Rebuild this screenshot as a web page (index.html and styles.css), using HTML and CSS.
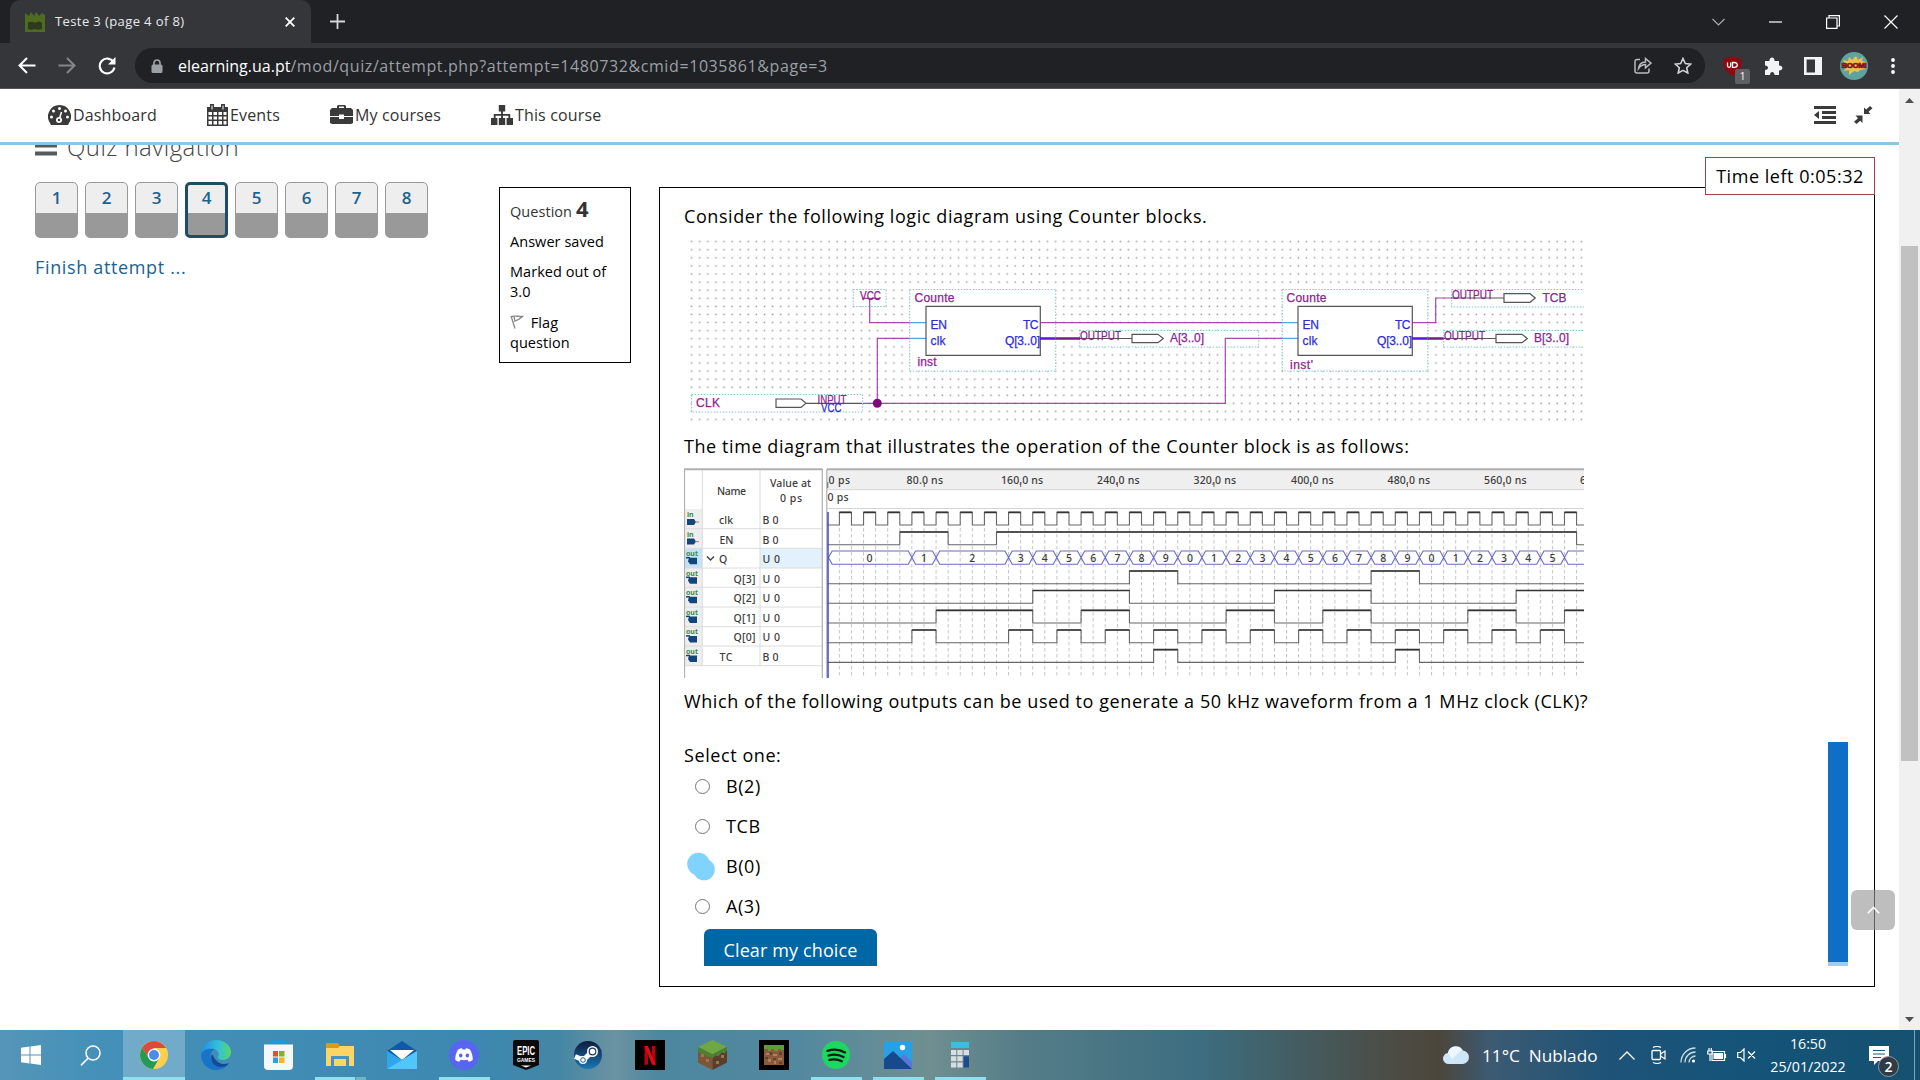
FILE: index.html
```html
<!DOCTYPE html>
<html lang="en">
<head>
<meta charset="utf-8">
<title>Teste 3 (page 4 of 8)</title>
<link rel="stylesheet" href="styles.css">
</head>
<body>
<header class="tabs">
  <div class="tab">
    <svg class="favicon" width="20" height="20" viewBox="0 0 20 20"><path fill="#4f6b22" d="M0 1l4 3 2-4 3 4 2-4 3 4 3-3 3 2v17H0z"/><path fill="#2e3a1c" d="M3 11c2-2 5-1 7 0 2-1 5-2 7 0v6c-2 1-5 1-7 0-2 1-5 1-7 0z"/></svg>
    <span class="tab-title">Teste 3 (page 4 of 8)</span>
    <svg class="tab-close" width="10" height="10" viewBox="0 0 10 10"><path d="M.7.7l8.6 8.6M9.3.7L.7 9.3" stroke="#fff" stroke-width="1.8"/></svg>
  </div>
  <svg class="tab-plus" width="15" height="15" viewBox="0 0 15 15"><path d="M7.5 0v15M0 7.5h15" stroke="#d5d6d8" stroke-width="1.8"/></svg>
  <div class="win-controls">
    <svg width="13" height="8" viewBox="0 0 13 8"><path d="M.5 1l6 6 6-6" fill="none" stroke="#aaa" stroke-width="1.2"/></svg>
    <svg width="13" height="2" viewBox="0 0 13 2"><path d="M0 1h13" stroke="#fff" stroke-width="1.2"/></svg>
    <svg width="14" height="14" viewBox="0 0 14 14"><path d="M.6 3h10.4v10.4H.6zM3 3V.6h10.4v10.4H11" fill="none" stroke="#fff" stroke-width="1.2"/></svg>
    <svg width="14" height="14" viewBox="0 0 14 14"><path d="M.5.5l13 13M13.5.5l-13 13" stroke="#fff" stroke-width="1.2"/></svg>
  </div>
</header>
<div class="toolbar">
  <svg width="18" height="17" viewBox="0 0 18 17"><path d="M17.5 8.5H2M9 1L1.5 8.5 9 16" fill="none" stroke="#fff" stroke-width="2"/></svg>
  <svg width="18" height="17" viewBox="0 0 18 17"><path d="M.5 8.5H16M9 1l7.5 7.5L9 16" fill="none" stroke="#84868a" stroke-width="2"/></svg>
  <svg width="18" height="18" viewBox="0 0 18 18"><path d="M15.4 5A7.4 7.4 0 1 0 16.400 10.500" fill="none" stroke="#fff" stroke-width="2.100"/><path d="M17.500 0v7.500H10z" fill="#fff"/></svg>
  <div class="urlbar">
    <svg width="12" height="14" viewBox="0 0 12 14"><path d="M3 6V4a3 3 0 0 1 6 0v2" fill="none" stroke="#9aa0a6" stroke-width="1.700"/><rect x=".5" y="5.500" width="11" height="8.500" rx="1.500" fill="#9aa0a6"/></svg>
    <span class="url"><b>elearning.ua.pt</b>/mod/quiz/attempt.php?attempt=1480732&amp;cmid=1035861&amp;page=3</span>
    <svg class="share" width="18" height="17" viewBox="0 0 18 17"><path d="M6 2.500H3a2 2 0 0 0-2 2V14a2 2 0 0 0 2 2h10a2 2 0 0 0 2-2v-2.500M4.500 11.500c.4-4 2.500-6.300 7-6.500V1.500L17 6.200l-5.500 4.600V7.600c-3.500 0-5.200 1.300-7 3.900z" fill="none" stroke="#b9bbbe" stroke-width="1.500"/></svg>
    <svg width="18" height="17" viewBox="0 0 18 17"><path d="M9 1.500l2.300 5 5.400.6-4 3.600 1.100 5.300L9 13.300 4.200 16l1.100-5.300-4-3.600 5.400-.6z" fill="none" stroke="#d0d1d3" stroke-width="1.600"/></svg>
  </div>
  <div class="exts">
    <div class="ublock">
      <svg width="19" height="20" viewBox="0 0 19 20"><path fill="#8d0b10" d="M9.500 0C12 2 15 2.500 18.500 2.500 19 11 17 16 9.500 20 2 16 0 11 .5 2.500 4 2.500 7 2 9.500 0z"/><path d="M4.500 6.500v3.300c0 2 3.200 2 3.200 0V6.500M9.500 6.500v4.800h1.800c4 0 4-4.800 0-4.800z" fill="none" stroke="#fff" stroke-width="1.300"/></svg>
      <span class="ext-count">1</span>
    </div>
    <svg width="19" height="19" viewBox="0 0 19 19"><path fill="#f1f3f4" d="M1 5h4.500C5 1 10.500 0 10.500 4.500V5H15v4.500c4.500 0 4.500 5 0 5V19h-4.500c0-4-4.500-4-4.500 0H1v-5c4 0 4-4.500 0-4.500z"/></svg>
    <svg width="18" height="18" viewBox="0 0 18 18"><path d="M1.300 1.300h15.400v15.400H1.300z" fill="none" stroke="#f1f3f4" stroke-width="2.600"/><path fill="#f1f3f4" d="M11 1h6v16h-6z"/></svg>
    <svg class="avatar" width="28" height="28" viewBox="0 0 28 28"><circle cx="14" cy="14" r="14" fill="#5fa3a1"/><path fill="#f2c14a" d="M3 8l5 1 1-4 3 3 4-4 2 4 5-3-1 4 4 1-3 4 3 3-6 1-2 2-4-1-5 4 0-5-5 1 2-4z"/><text x="14" y="15.500" class="boom">BOOM!</text></svg>
    <svg class="dots3" width="4" height="16" viewBox="0 0 4 16"><g fill="#fff"><circle cx="2" cy="2" r="1.900"/><circle cx="2" cy="8" r="1.900"/><circle cx="2" cy="14" r="1.900"/></g></svg>
  </div>
</div>
<div class="viewport">
  <div class="page">
    <nav class="nav">
      <a class="n1"><svg width="23" height="20" viewBox="0 0 23 20"><path fill="#3a3a3a" d="M11.500 0A11.500 11.500 0 0 0 2 18l1 2h17l1-2A11.500 11.500 0 0 0 11.500 0z"/><g fill="#fff"><circle cx="11.500" cy="3.500" r="1.500"/><circle cx="5.500" cy="6" r="1.500"/><circle cx="3.500" cy="12" r="1.500"/><circle cx="19.500" cy="12" r="1.500"/><circle cx="17.500" cy="6" r="1.500"/><circle cx="11" cy="15" r="3"/></g><path d="M11 15l2.500-8" stroke="#fff" stroke-width="1.600"/><circle cx="11" cy="15" r="1.200" fill="#3a3a3a"/></svg><span>Dashboard</span></a>
      <a class="n2"><svg width="21" height="22" viewBox="0 0 21 22"><path fill="#3a3a3a" fill-rule="evenodd" d="M0 3h3V0h4v3h7V0h4v3h3v19H0zM1.500 8v3h3.500V8zM6.500 8v3h3.500V8zM11.500 8v3h3.500V8zM16.500 8v3h3V8zM1.500 12.500v3h3.500v-3zM6.500 12.500v3h3.500v-3zM11.500 12.500v3h3.500v-3zM16.500 12.500v3h3v-3zM1.500 17v3.500h3.500V17zM6.500 17v3.500h3.500V17zM11.500 17v3.500h3.500V17zM16.500 17v3.500h3V17zM4.500 1.500v4h1v-4zM15.500 1.500v4h1v-4z"/></svg><span>Events</span></a>
      <a class="n3"><svg width="23" height="20" viewBox="0 0 23 20"><path fill="#3a3a3a" fill-rule="evenodd" d="M7 3V1l1-1h7l1 1v2h5l2 2v6H14V9.500H9V11H0V5l2-2zM9 1.500V3h5V1.500zM0 12h9v2h5v-2h9v6l-2 1H2l-2-1z"/></svg><span>My courses</span></a>
      <a class="n4"><svg width="22" height="20" viewBox="0 0 24 20" preserveAspectRatio="none"><path fill="#3a3a3a" d="M8.500 0h7v6.500H13V9h8v4h3v7h-7v-7h2v-2.300h-6V13h2.500v7h-7v-7H11v-2.300H5V13h2v7H0v-7h3V9h8V6.500H8.500z"/></svg><span>This course</span></a>
      <svg class="outdent" width="22" height="18" viewBox="0 0 22 18"><path fill="#3a3a3a" d="M0 0h22v3H0zM8 5h14v3H8zM8 10h14v3H8zM0 15h22v3H0zM5 5v8L0 9z"/></svg>
      <svg class="compress" width="19" height="18" viewBox="0 0 19 18"><path fill="#3a3a3a" d="M10 8V1.500l2.200 2L16 0l2.500 2.200-4 3.600L16.500 8zM8.500 9.500V17l-2.300-2.300L2.500 18 0 15.800l4-3.600-2.500-2.700z"/></svg>
    </nav>
    <main class="content">
      <aside class="side">
        <h3 class="side-title"><svg width="22" height="20" viewBox="0 0 22 20"><path fill="#555b60" d="M0 0h22v4H0zM0 7.500h22v4H0zM0 15.500h22v4H0z"/></svg><span>Quiz navigation</span></h3>
        <div class="qn">
          <a>1</a><a>2</a><a>3</a><a class="current">4</a><a>5</a><a>6</a><a>7</a><a>8</a>
        </div>
        <a class="finish">Finish attempt ...</a>
      </aside>
      <section class="info">
        <p class="qno">Question <b>4</b></p>
        <p>Answer saved</p>
        <p>Marked out of 3.0</p>
        <p class="flag"><svg width="14" height="14" viewBox="0 0 14 14"><path d="M1 1l4 12.500M1.500 1.500c4-1 6 0 11 0-2 2-3 3-8.500 5M4 2l1 4" fill="none" stroke="#888" stroke-width="1.300"/></svg> Flag<br>question</p>
      </section>
      <section class="question">
        <p class="t t1">Consider the following logic diagram using Counter blocks.</p>
        <svg class="circuit" width="900" height="190" viewBox="684 235 900 190">
          <defs><pattern id="dots" x="687.700" y="237.700" width="8.090" height="8.090" patternUnits="userSpaceOnUse"><rect x="3.200" y="3.200" width="1.500" height="1.500" fill="#999"/></pattern></defs>
          <rect x="688" y="238" width="896" height="184" fill="url(#dots)"/>
          <g class="box">
            <path d="M853.300 289.500h32.700v17h-32.700zM909.700 289.500h146v81.500h-146zM1282.300 289.500h145.500v81.500h-145.500zM691.700 394.500h171v17.500h-171zM1079.700 330.500h179v16.500h-179zM1451.700 289.500h140v17.500h-140zM1443.700 330.500h150v16.500h-150z"/>
          </g>
          <g class="wire"><path d="M862 298.300h18M869.700 298.300v24.400h40M877.300 403.300v-65h32.400M862.700 403.300h362.600v-65h57M1040.300 322.700h242M1412.300 322.700h23.400V298h16"/></g>
          <g class="pinlead"><path d="M909.700 322.700h16.300M909.700 338.300h16.300M1282.300 322.700h15.700M1282.300 338.300h15.700"/></g>
          <g class="dark"><path d="M926 306.300h114.300v49H926zM1298 306.300h114.300v49H1298zM776 399h25l5 4.200-5 4.200h-25zM806 403.300h56M1080 338.500h52M1132 334.300h26l5.300 4.200-5.300 4.200h-26zM1451 298h53M1504 293.700h26l5.300 4.300-5.300 4.300h-26zM1444 338.500h52M1496 334.300h26l5.300 4.200-5.300 4.200h-26z"/></g>
          <path d="M1040 338.500h15.700M1412 338.500h15.700" stroke="#5a14e0" stroke-width="2.600"/>
          <path d="M1055.700 338.500h24.300M1427.700 338.500h16" stroke="#7c1a86" stroke-width="2.400"/>
          <circle cx="877.300" cy="403.300" r="4.500" fill="#7c0a7c"/>
          <g class="pt">
            <text x="860" y="299.500" textLength="21" lengthAdjust="spacingAndGlyphs">VCC</text>
            <text x="914.500" y="301.700" textLength="40">Counte</text>
            <text x="917.500" y="366.300" textLength="19">inst</text>
            <text x="1286.500" y="301.700" textLength="40">Counte</text>
            <text x="1290" y="369.300" textLength="23">inst'</text>
            <text x="696" y="406.700" textLength="24">CLK</text>
            <text x="817.500" y="403.700" textLength="29" lengthAdjust="spacingAndGlyphs">INPUT</text>
            <text x="1080" y="339.500" textLength="41" lengthAdjust="spacingAndGlyphs">OUTPUT</text>
            <text x="1170" y="342.300" textLength="34">A[3..0]</text>
            <text x="1452" y="299.300" textLength="41" lengthAdjust="spacingAndGlyphs">OUTPUT</text>
            <text x="1542.500" y="301.500" textLength="24">TCB</text>
            <text x="1444" y="339.500" textLength="41" lengthAdjust="spacingAndGlyphs">OUTPUT</text>
            <text x="1534" y="342.300" textLength="35">B[3..0]</text>
          </g>
          <g class="bt">
            <text x="930.500" y="329" textLength="16.500">EN</text><text x="930.500" y="345.300" textLength="15">clk</text>
            <text x="1023" y="329" textLength="15.500">TC</text><text x="1005" y="345.300" textLength="35">Q[3..0]</text>
            <text x="1302.500" y="329" textLength="16.500">EN</text><text x="1302.500" y="345.300" textLength="15">clk</text>
            <text x="1395" y="329" textLength="15.500">TC</text><text x="1377" y="345.300" textLength="35">Q[3..0]</text>
            <text x="821" y="412.200" textLength="20.500" lengthAdjust="spacingAndGlyphs">VCC</text>
          </g>
        </svg>
        <p class="t t2">The time diagram that illustrates the operation of the Counter block is as follows:</p>
        <svg class="timing" width="900" height="210" viewBox="684 468 900 210">
          <defs>
            <pattern id="grid" x="826.800" y="528" width="12.085" height="6" patternUnits="userSpaceOnUse"><rect width="1" height="3.500" fill="#c4c4c4"/></pattern>
            <g id="in"><text x="687" y="517" class="io">in</text><path fill="#12457c" d="M687 519h7l2 3-2 3h-7z"/><path d="M695 522h4" stroke="#c66" stroke-width="1"/></g>
            <g id="out"><text x="686" y="517" class="io">out</text><path fill="#12457c" d="M689 518.500h8v6.500h-7l-2-3z"/><path d="M686 518.500h4" stroke="#12457c" stroke-width="1.500"/></g>
          </defs>
          <rect x="684" y="509" width="18" height="157" fill="#eee"/>
          <rect x="684" y="548.500" width="18" height="19.500" fill="#c4e1f5"/><rect x="760" y="548.500" width="62" height="19.500" fill="#e2f1fc"/>
          <path d="M684 528.700h138M684 548.300h138M684 568h138M684 587.300h138M684 607h138M684 626.700h138M684 646h138M684 665.700h138M702.300 470v196M760 470v196" stroke="#dcdcdc"/>
          <rect x="827" y="470" width="757" height="19.500" fill="#efefef"/>
          <path d="M827 489.700h757M827 508.500h757" stroke="#d4d4d4"/>
          <path d="M684 469.300h138.500M827 469.300h757" stroke="#b0b0b0" stroke-width="2"/>
          <path d="M684.500 469v209M822.300 469v209M826.800 469v209" stroke="#b0b0b0" stroke-width="1.200"/>
          <rect x="838" y="528" width="746" height="150" fill="url(#grid)"/>
          <g class="tt">
            <text x="717" y="494.500" textLength="29">Name</text><text x="770" y="487" textLength="41">Value at</text><text x="780" y="502" textLength="22">0 ps</text>
            <text x="719" y="524" textLength="14">clk</text><text x="719.500" y="543.700" textLength="14">EN</text><text x="719" y="563.200">Q</text>
            <text x="733.500" y="582.700" textLength="22">Q[3]</text><text x="733.500" y="602.300" textLength="22">Q[2]</text><text x="733.500" y="621.800" textLength="22">Q[1]</text><text x="733.500" y="641.400" textLength="22">Q[0]</text><text x="719.500" y="661" textLength="13">TC</text>
            <text x="762.500" y="524" textLength="16">B 0</text><text x="762.500" y="543.700" textLength="16">B 0</text><text x="762.500" y="563.200" textLength="17.500">U 0</text><text x="762.500" y="582.700" textLength="17.500">U 0</text><text x="762.500" y="602.300" textLength="17.500">U 0</text><text x="762.500" y="621.800" textLength="17.500">U 0</text><text x="762.500" y="641.400" textLength="17.500">U 0</text><text x="762.500" y="661" textLength="16">B 0</text>
            <text x="828.500" y="484" textLength="21.500">0 ps</text><text x="827.500" y="500.700" textLength="21">0 ps</text>
            <text x="906.500" y="484" textLength="36.500">80.0 ns</text><text x="1001" y="484" textLength="42">160,0 ns</text><text x="1097" y="484" textLength="42.500">240,0 ns</text><text x="1193.500" y="484" textLength="42.500">320,0 ns</text><text x="1291" y="484" textLength="42.500">400,0 ns</text><text x="1387.500" y="484" textLength="42.500">480,0 ns</text><text x="1484" y="484" textLength="42.500">560,0 ns</text><text x="1580" y="484">6</text>
          </g>
          <path d="M827.800 482v6M924.300 482v5M1020.700 482v5M1117.400 482v5M1214 482v5M1310.700 482v5M1407.400 482v5M1504.100 482v5" stroke="#666"/>
          <path d="M707 556.500l3.500 3.500 3.500-3.500" fill="none" stroke="#444" stroke-width="1.500"/>
          <use href="#in"/><use href="#in" y="19.600"/><use href="#out" y="39.200"/><use href="#out" y="58.800"/><use href="#out" y="78.300"/><use href="#out" y="97.900"/><use href="#out" y="117.400"/><use href="#out" y="137"/>
          <!-- one horizontal unit is 10 ns -->
          <g class="wave">
            <path transform="matrix(12.085 0 0 1 827.300 512.300)" d="M0 12.700
              H1V0H2V12.700H3V0H4V12.700H5V0H6V12.700H7V0H8V12.700H9V0H10V12.700
              H11V0H12V12.700H13V0H14V12.700H15V0H16V12.700H17V0H18V12.700H19V0H20V12.700
              H21V0H22V12.700H23V0H24V12.700H25V0H26V12.700H27V0H28V12.700H29V0H30V12.700
              H31V0H32V12.700H33V0H34V12.700H35V0H36V12.700H37V0H38V12.700H39V0H40V12.700
              H41V0H42V12.700H43V0H44V12.700H45V0H46V12.700H47V0H48V12.700H49V0H50V12.700
              H51V0H52V12.700H53V0H54V12.700H55V0H56V12.700H57V0H58V12.700H59V0H60V12.700
              H61V0H62V12.700H63"/>
            <path transform="matrix(12.085 0 0 1 827.300 532)" d="M0 12.700H6V0H10V12.700H14V0H62V12.700H63"/>
            <path transform="matrix(12.085 0 0 1 827.300 571)" d="M0 12.700H25V0H29V12.700H45V0H49V12.700H63"/>
            <path transform="matrix(12.085 0 0 1 827.300 590.500)" d="M0 12.700H17V0H25V12.700H37V0H45V12.700H57V0H63"/>
            <path transform="matrix(12.085 0 0 1 827.300 610.300)" d="M0 12.700H9V0H17V12.700H21V0H25V12.700H33V0H37V12.700H41V0H45V12.700H53V0H57V12.700H61V0H63"/>
            <path transform="matrix(12.085 0 0 1 827.300 630)" d="M0 12.700H7V0H9V12.700H15V0H17V12.700H19V0H21V12.700H23V0H25V12.700H27V0H29V12.700H31V0H33V12.700H35V0H37V12.700H39V0H41V12.700H43V0H45V12.700H47V0H49V12.700H51V0H53V12.700H55V0H57V12.700H59V0H61V12.700H63"/>
            <path transform="matrix(12.085 0 0 1 827.300 649.700)" d="M0 12.700H27V0H29V12.700H47V0H49V12.700H63"/>
          </g>
          <g class="high">
            <path transform="matrix(12.085 0 0 1 827.300 512.300)" d="M1 0H2M3 0H4M5 0H6M7 0H8M9 0H10M11 0H12M13 0H14M15 0H16M17 0H18M19 0H20M21 0H22M23 0H24M25 0H26M27 0H28M29 0H30M31 0H32M33 0H34M35 0H36M37 0H38M39 0H40M41 0H42M43 0H44M45 0H46M47 0H48M49 0H50M51 0H52M53 0H54M55 0H56M57 0H58M59 0H60M61 0H62"/>
            <path transform="matrix(12.085 0 0 1 827.300 532)" d="M6 0H10M14 0H62"/>
            <path transform="matrix(12.085 0 0 1 827.300 571)" d="M25 0H29M45 0H49"/>
            <path transform="matrix(12.085 0 0 1 827.300 590.500)" d="M17 0H25M37 0H45M57 0H63"/>
            <path transform="matrix(12.085 0 0 1 827.300 610.300)" d="M9 0H17M21 0H25M33 0H37M41 0H45M53 0H57M61 0H63"/>
            <path transform="matrix(12.085 0 0 1 827.300 630)" d="M7 0H9M15 0H17M19 0H21M23 0H25M27 0H29M31 0H33M35 0H37M39 0H41M43 0H45M47 0H49M51 0H53M55 0H57M59 0H61"/>
            <path transform="matrix(12.085 0 0 1 827.300 649.700)" d="M27 0H29M47 0H49"/>
          </g>
          <g class="bus">
            <path transform="matrix(12.085 0 0 1 827.300 551)" d="M.1 6.600l.3-6.600H6.700l.3 6.600-.3 6.700H.4zM7 6.600l.3-6.600h1.400l.3 6.600-.3 6.700H7.300zM9 6.600l.3-6.600h5.400l.3 6.600-.3 6.700H9.300zM15 6.600l.3-6.600h1.400l.3 6.600-.3 6.700h-1.400zm2 0l.3-6.600h1.400l.3 6.600-.3 6.700h-1.400zm2 0l.3-6.600h1.400l.3 6.600-.3 6.700h-1.400zm2 0l.3-6.600h1.400l.3 6.600-.3 6.700h-1.400zm2 0l.3-6.600h1.400l.3 6.600-.3 6.700h-1.400zm2 0l.3-6.600h1.400l.3 6.600-.3 6.700h-1.400zm2 0l.3-6.600h1.400l.3 6.600-.3 6.700h-1.400zm2 0l.3-6.600h1.400l.3 6.600-.3 6.700h-1.400zm2 0l.3-6.600h1.400l.3 6.600-.3 6.700h-1.400zm2 0l.3-6.600h1.400l.3 6.600-.3 6.700h-1.400zm2 0l.3-6.600h1.400l.3 6.600-.3 6.700h-1.400zm2 0l.3-6.600h1.400l.3 6.600-.3 6.700h-1.400zm2 0l.3-6.600h1.400l.3 6.600-.3 6.700h-1.400zm2 0l.3-6.600h1.400l.3 6.600-.3 6.700h-1.400zm2 0l.3-6.600h1.400l.3 6.600-.3 6.700h-1.400zm2 0l.3-6.600h1.400l.3 6.600-.3 6.700h-1.400zm2 0l.3-6.600h1.400l.3 6.600-.3 6.700h-1.400zm2 0l.3-6.600h1.400l.3 6.600-.3 6.700h-1.400zm2 0l.3-6.600h1.400l.3 6.600-.3 6.700h-1.400zm2 0l.3-6.600h1.400l.3 6.600-.3 6.700h-1.400zm2 0l.3-6.600h1.400l.3 6.600-.3 6.700h-1.400zm2 0l.3-6.600h1.400l.3 6.600-.3 6.700h-1.400zm2 0l.3-6.600h1.400l.3 6.600-.3 6.700h-1.400zM64 0H61.300L61 6.600l.3 6.700H64"/>
          </g>
          <text class="vals" y="562.200" x="869.600 924 972.300 1020.700 1044.800 1069 1093.200 1117.400 1141.500 1165.700 1189.900 1214 1238.200 1262.400 1286.500 1310.700 1334.900 1359 1383.200 1407.400 1431.600 1455.700 1479.900 1504.100 1528.200 1552.400">01234567890123456789012345</text>
          <path d="M828 512v166" stroke="#4444c4" stroke-width="1.500"/>
        </svg>
        <p class="t t3">Which of the following outputs can be used to generate a 50 kHz waveform from a 1 MHz clock (CLK)?</p>
        <p class="t t4">Select one:</p>
        <ul class="opts">
          <li><i></i><span>B(2)</span></li>
          <li><i></i><span>TCB</span></li>
          <li class="picked"><svg width="29" height="30" viewBox="0 0 29 30"><g fill="#80d3ff"><circle cx="11.500" cy="12" r="11.300"/><circle cx="17" cy="17.500" r="10.800"/></g></svg><span>B(0)</span></li>
          <li><i></i><span>A(3)</span></li>
        </ul>
        <button class="clear">Clear my choice</button>
        <div class="bluebar"></div>
        <div class="timer">Time left 0:05:32</div>
      </section>
    </main>
    <div class="totop"><svg width="13" height="8" viewBox="0 0 13 8"><path d="M.8 7.200L6.500 1.500l5.700 5.700" fill="none" stroke="#fff" stroke-width="1.600"/></svg></div>
  </div>
  <div class="scrollbar"><svg width="9" height="5" viewBox="0 0 9 5"><path fill="#505050" d="M0 5l4.500-5L9 5z"/></svg><div class="thumb"></div><svg class="down" width="9" height="5" viewBox="0 0 9 5"><path fill="#505050" d="M0 0l4.500 5L9 0z"/></svg></div>
</div>
<footer class="taskbar">
  <div class="apps">
    <div class="app first"><svg width="20" height="20" viewBox="0 0 20 20"><path fill="#fff" d="M0 2.800l8.500-1.200v8H0zM9.500 1.400L20 0v9.600H9.500zM0 10.500h8.500v8L0 17.300zM9.500 10.500H20V20L9.500 18.600z"/></svg></div>
    <div class="app search"><svg width="21" height="21" viewBox="0 0 21 21"><circle cx="13" cy="8" r="7" fill="none" stroke="#fff" stroke-width="1.500"/><path d="M8.200 13L1 20.300" stroke="#fff" stroke-width="1.700"/></svg></div>
    <div class="app active open"><svg width="28" height="28" viewBox="0 0 28 28"><circle cx="14" cy="14" r="14" fill="#fcd04b"/><path fill="#db4a3a" d="M1.900 7A14 14 0 0 1 26.100 7H14L9 17z"/><path fill="#249a54" d="M1.900 7A14 14 0 0 0 13 28l6-10.500-10-.5z"/><circle cx="14" cy="14" r="6.400" fill="#fff"/><circle cx="14" cy="14" r="5" fill="#4b8bf0"/></svg></div>
    <div class="app"><svg width="30" height="30" viewBox="0 0 30 30"><defs><linearGradient id="eg" x1="0" x2="1"><stop offset="0" stop-color="#1f8fe0"/><stop offset=".6" stop-color="#35c1d9"/><stop offset="1" stop-color="#5ad860"/></linearGradient></defs><path fill="#1874c8" d="M0 15C2 8 9 6 14 9c-5 2-6 9-2 13 4 4 11 5 16 1-3 5-8 7-13 7C6 30 0 23 0 15z"/><path fill="url(#eg)" d="M0 14C1 5 8 0 15 0c9 0 15 6 15 12 0 5-4 8-8 8-3 0-6-1-5-3 2-3 0-7-4-8C7 8 2 10 0 14z"/><path fill="#134c96" d="M11 14c-3 6 2 13 9 13 3 0 6-1 8-4-4 2-9 1-11-1-3-2-4-5-6-8z"/></svg></div>
    <div class="app"><svg width="29" height="30" viewBox="0 0 29 30"><path d="M8 6V1.500h13V6" fill="none" stroke="#1b9be0" stroke-width="2.500"/><path fill="#f4f6f8" d="M0 4.500h29V26q0 4-4 4H4q-4 0-4-4z"/><path fill="#e2512c" d="M9 11h5v5.500H9z"/><path fill="#7fb52b" d="M15 11h5.500v5.500H15z"/><path fill="#2aa0e2" d="M9 17.500h5V23H9z"/><path fill="#f5b81f" d="M15 17.500h5.500V23H15z"/></svg></div>
    <div class="app open two"><svg width="28" height="24" viewBox="0 0 28 24"><path fill="#d79a1c" d="M0 0h12l2 3-2 3H0z"/><path fill="#fbd667" d="M0 5h12l2-2h14v20H0z"/><path d="M6.500 23V14.500h15V23" fill="none" stroke="#4a91c4" stroke-width="3"/></svg></div>
    <div class="app"><svg width="30" height="28" viewBox="0 0 30 28"><path fill="#0f59a8" d="M0 10L15 0l15 10-15 11z"/><path fill="#fff" d="M3 9h24L15 19z"/><path fill="#2ea6ea" d="M0 10l15 9 15-9v18H0z"/><path fill="#52c5fa" d="M0 28L30 10v18z"/></svg></div>
    <div class="app open"><svg width="30" height="30" viewBox="0 0 30 30"><circle cx="15" cy="15" r="15" fill="#5865f2"/><path fill="#fff" fill-rule="evenodd" d="M9 9.500c2-1 3-1.300 4-1.300l.6 1.200h2.800l.6-1.200c1 0 2 .3 4 1.300 2 3.500 3 7 2.700 10.500-1.500 1.100-3 1.600-4 1.800l-1.200-2c-2 .6-5 .6-7 0l-1.200 2c-1-.2-2.500-.7-4-1.800C6 16.500 7 13 9 9.500zM11.700 13.500a1.800 2 0 1 0 .1 0zM18.300 13.500a1.800 2 0 1 0 .1 0z"/></svg></div>
    <div class="app"><svg width="26" height="30" viewBox="0 0 26 30"><path fill="#0a0a0a" d="M2 0h22q2 0 2 2v23L13 30 0 25V2q0-2 2-2z"/><text x="13" y="15" class="epic" textLength="18" lengthAdjust="spacingAndGlyphs">EPIC</text><text x="13" y="22" class="games" textLength="18" lengthAdjust="spacingAndGlyphs">GAMES</text><path fill="#fff" d="M8 25.500h10l-5 2z"/></svg></div>
    <div class="app"><svg width="28" height="28" viewBox="0 0 28 28"><defs><linearGradient id="sg" x2="0" y2="1"><stop offset="0" stop-color="#101a3c"/><stop offset="1" stop-color="#1a77b4"/></linearGradient></defs><circle cx="14" cy="14" r="14" fill="url(#sg)"/><path d="M1 15.500l8.500 3.500 8-8" fill="none" stroke="#fff" stroke-width="5"/><circle cx="9" cy="19" r="4" fill="#fff"/><circle cx="18.500" cy="10.500" r="5.500" fill="#fff"/><circle cx="18.500" cy="10.500" r="3.300" fill="none" stroke="#1b3766" stroke-width="1.200"/><circle cx="9" cy="19" r="2.300" fill="none" stroke="#1b5d98"/></svg></div>
    <div class="app"><svg width="30" height="30" viewBox="0 0 30 30"><path fill="#000" d="M0 0h30v30H0z"/><path fill="#b1060f" d="M9.500 6h3.500v18.500l-3.500.5zM17 6h3.500v19l-3.500-.5z"/><path fill="#e50914" d="M9.500 6H13l7.500 19-3.500-.5z"/></svg></div>
    <div class="app"><svg width="29" height="30" viewBox="0 0 29 30"><path fill="#6fa843" d="M14.500 0L29 7l-14.500 7.500L0 7z"/><path fill="#7d5537" d="M0 7l14.500 7.500V30L0 22.500z"/><path fill="#5c3d29" d="M29 7l-14.500 7.500V30L29 22.500z"/><path fill="#4d8131" d="M0 7l14.500 7.500v4l-3-2-2 .5-3-3-3 .5L0 11zM29 7l-14.500 7.500v4l3-3 3 1 3-4 3 1 2.500-3z"/><path d="M3 14h3v3H3zM8 19h3v3H8zM18 21h3v3h-3zM23 15h3v3h-3z" fill="#9b7450"/></svg></div>
    <div class="app"><svg width="30" height="30" viewBox="0 0 30 30"><path fill="#000" d="M0 0h30v30H0z"/><path fill="#8a5a3c" d="M5 6h20v19H5z"/><path fill="#5f9c32" d="M5 5h20v5h-3v-1h-3v2h-4V9h-3v2H9V9H5z"/><path fill="#b37f5b" d="M7 13h3v2H7zM14 14h4v2h-4zM9 19h3v3H9zM19 18h4v2h-4zM15 21h2v3h-2z"/><path fill="#643f2a" d="M11 12h2v3h-2zM6 17h3v2H6zM20 12h3v3h-3zM14 18h3v2h-3zM20 22h3v2h-3z"/></svg></div>
    <div class="app open"><svg width="28" height="28" viewBox="0 0 28 28"><circle cx="14" cy="14" r="14" fill="#1ed760"/><path d="M5.500 9.800c6-1.800 12.500-1.200 17.500 1.600M6.500 14.500c5-1.400 10.500-.9 15 1.600M7.500 18.900c4.200-1.100 8.500-.7 12.300 1.400" fill="none" stroke="#0c1a10" stroke-width="2.300" stroke-linecap="round"/></svg></div>
    <div class="app open"><svg width="28" height="28" viewBox="0 0 28 28"><path fill="#27a0e6" d="M0 0h28v28H0z"/><path fill="#5a76d6" d="M9 28L20 13l8 8v7z"/><path fill="#164a8c" d="M0 18l9-8 19 18H0z"/><circle cx="18.500" cy="6.500" r="2.700" fill="#fff"/></svg></div>
    <div class="app open"><svg width="18" height="26" viewBox="0 0 18 26"><path fill="#38bfe4" d="M0 0h18v6H0z"/><g fill="#d9dde3"><path d="M0 8h5.300v5H0zM6.300 8h5.300v5H6.300zM12.600 8H18v5h-5.400zM0 14.300h5.300v5H0zM6.300 14.300h5.300v5H6.300zM0 20.500h5.300v5H0zM6.300 20.500h5.300v5H6.300z"/></g><path fill="#1d4b8e" d="M12.600 14.300H18v11.200h-5.400z"/></svg></div>
  </div>
  <div class="tray">
    <svg class="cloud" width="27" height="20" viewBox="0 0 27 20"><path fill="#cfe6f8" d="M6 19a5.500 5.500 0 0 1-1-11A8 8 0 0 1 20 5.500 6.800 6.800 0 0 1 20 19z"/><path fill="#eef7fd" d="M5 8A8 8 0 0 1 19 4.500L9 14z"/></svg>
    <span class="weather">11°C&nbsp; Nublado</span>
    <svg class="up" width="16" height="9" viewBox="0 0 16 9"><path d="M.5 8.500L8 1l7.500 7.500" fill="none" stroke="#fff" stroke-width="1.300"/></svg>
    <svg class="cam" width="15" height="18" viewBox="0 0 15 18"><rect x="1" y="4.500" width="8.500" height="9" rx="1" fill="none" stroke="#fff" stroke-width="1.300"/><path d="M9.500 8l4.500-3v8l-4.500-3M2 1.500q4-2 8 0M2 16.500q4 2 8 0" fill="none" stroke="#fff" stroke-width="1.200"/></svg>
    <svg class="wifi" width="16" height="16" viewBox="0 0 16 16"><path d="M1 15.500A14.500 14.500 0 0 1 15.500 1M5 15.500A10.500 10.500 0 0 1 15.500 5M9 15.500A6.500 6.500 0 0 1 15.500 9" fill="none" stroke="#c7dde6" stroke-width="1.300"/><circle cx="13.500" cy="14" r="1.600" fill="#fff"/></svg>
    <svg class="batt" width="20" height="14" viewBox="0 0 20 14"><path d="M5 3.500h12.500v9H5zM18.500 6v4M.8 3h4.500v3H.8zM2 0v3M4.300 0v3M3 6v7" fill="none" stroke="#fff" stroke-width="1.200"/><path fill="#fff" d="M6.500 5H16v6H6.500z"/></svg>
    <svg class="mute" width="19" height="14" viewBox="0 0 19 14"><path d="M.7 4.500h2.800L7 1v12L3.500 9.500H.7zM11 3.500l7 7M18 3.500l-7 7" fill="none" stroke="#fff" stroke-width="1.200"/></svg>
    <div class="clock"><span>16:50</span><span>25/01/2022</span></div>
    <div class="notif"><svg width="20" height="19" viewBox="0 0 20 19"><path fill="#fff" d="M0 0h20v15H9l-4 4v-4H0z"/><path d="M4 4.500h12M4 8h12M4 11.500h8" stroke="#1c5c80" stroke-width="1.100"/></svg><span class="badge">2</span></div>
    <div class="peek"></div>
  </div>
</footer>
</body>
</html>
```
FILE: styles.css
```css
* { box-sizing: border-box; }
body {
  margin: 0;
  width: 1920px;
  height: 1080px;
  overflow: hidden;
  display: flex;
  flex-direction: column;
  font-family: "Open Sans", "Noto Sans", sans-serif;
  background: #fff;
  color: #000;
}
svg { display: block; flex: none; }
p, ul, h3 { margin: 0; padding: 0; }
a { color: inherit; }

/* browser chrome */
.tabs { flex: none; height: 43px; background: #202124; display: flex; align-items: center; }
.tab {
  width: 301px; height: 43px; margin-left: 10px; padding: 0 16px 0 15px;
  display: flex; align-items: center;
  background: #35363a; border-radius: 10px 10px 0 0; color: #e8eaed;
}
.tab-title { margin: -2px 0 0 10px; font-size: 13px; letter-spacing: .4px; }
.tab-close { margin-left: auto; }
.tab-plus { margin-left: 19px; }
.win-controls { margin-left: auto; padding-right: 22px; display: flex; align-items: center; height: 37px; gap: 44px; }
.toolbar {
  flex: none; height: 46px; background: #35363a; border-bottom: 1px solid #55565a;
  display: flex; align-items: center; gap: 22px; padding-left: 18px;
}
.urlbar {
  width: 1570px; height: 35px; margin-left: -3px; padding: 0 13px 0 16px;
  display: flex; align-items: center; background: #202124; border-radius: 18px;
}
.url { margin-left: 15px; font-size: 16px; letter-spacing: .6px; color: #9aa0a6; white-space: nowrap; }
.url b { font-weight: 400; letter-spacing: 0; color: #fff; }
.share { margin-left: auto; margin-right: 22px; }
.exts { display: flex; align-items: center; gap: 21px; margin-left: -4px; }
.avatar { margin-left: -3px; }
.dots3 { margin-left: 2px; }
.ublock { position: relative; width: 20px; }
.ext-count {
  position: absolute; left: 12px; top: 13px; width: 15px; height: 15px;
  background: #5f6063; border-radius: 2px; color: #fff; font-size: 10px; line-height: 15px; text-align: center;
}
.boom { font: bold 8px "Liberation Sans", sans-serif; fill: #d3202f; text-anchor: middle; stroke: #7c1018; stroke-width: .7; letter-spacing: -.5px; }

/* page */
.viewport { flex: none; height: 941px; display: flex; }
.page { position: relative; width: 1899px; height: 941px; overflow: hidden; }
.nav {
  position: relative; z-index: 2; height: 56px; background: #fff; border-bottom: 3px solid #8cc6e5;
  display: flex; align-items: center; padding: 0 26px 0 48px; color: #333; font-size: 16px;
}
.nav a { display: flex; align-items: center; gap: 2px; height: 51px; margin-bottom: 2px; letter-spacing: .15px; }
.n1 { width: 159px; }
.n2 { width: 123px; }
.n3 { width: 161px; }
.outdent { margin-left: auto; margin-bottom: 2px; }
.compress { margin-left: 18px; margin-bottom: 2px; }
.content { display: flex; align-items: flex-start; height: 885px; }
.side { width: 464px; margin-left: 35px; }
.side-title {
  display: flex; align-items: flex-end; gap: 10px; height: 33px; margin-top: -15px;
  font-size: 24px; font-weight: 300; line-height: 33px; letter-spacing: .45px; color: #444;
}
.side-title svg { margin-bottom: 7px; }
.qn { display: flex; gap: 7px; margin-top: 19px; }
.qn a {
  width: 43px; height: 56px; border: 1px solid #999; border-radius: 5px;
  background: linear-gradient(#eee 0 30px, #999 30px);
  text-align: center; font-size: 17px; font-weight: 600; line-height: 30px; color: #1b6291;
}
.qn .current { border: 3px solid #1f4d63; line-height: 26px; background: linear-gradient(#eee 0 28px, #999 28px); }
.finish { display: block; width: max-content; margin-top: 16px; font-size: 18px; line-height: 26px; letter-spacing: .65px; color: #1b6291; }
.info {
  width: 132px; height: 176px; margin-top: 42px; padding: 10px 8px 0 10px;
  border: 1px solid #000; font-size: 14.500px; line-height: 20px; letter-spacing: .05px;
}
.info p { margin-bottom: 10px; }
.info .qno { color: #333; line-height: 24px; margin-bottom: 8px; }
.info .flag { margin-top: 11px; }
.qno b { font-size: 22px; line-height: 20px; }
.flag svg { display: inline-block; vertical-align: -1px; margin-right: 3px; }
.question {
  position: relative; width: 1216px; height: 800px; margin: 42px 0 0 28px;
  border: 1px solid #000; padding: 15px 0 0 24px; font-size: 18px; line-height: 27px; letter-spacing: .58px;
}
.circuit { margin-top: 5px; letter-spacing: 0; }
.t { white-space: nowrap; }
.t2 { margin-top: 8px; }
.timing { margin-top: 8px; letter-spacing: 0; }
.t3 { margin-top: 10px; }
.t4 { margin-top: 27px; height: 25px; }
.opts { list-style: none; }
.opts li { height: 40px; display: flex; align-items: center; gap: 16px; padding-left: 11px; line-height: 40px; }
.opts span { margin-top: -2px; }
.opts i { width: 15px; height: 15px; margin-top: -2px; border: 1.500px solid #767676; border-radius: 50%; }
.opts .picked { padding-left: 3px; gap: 10px; }
.clear {
  display: block; width: 173px; height: 37px; margin: 2px 0 0 20px; padding: 5px 0 0;
  border: 0; border-radius: 6px 6px 0 0; background: #0067a6; color: #fff; font: inherit; line-height: 32px; letter-spacing: .12px;
}
.bluebar { position: absolute; right: 26px; top: 554px; width: 20px; height: 224px; background: #0f6fc6; border-bottom: 4px solid #9fcdf2; }
.timer {
  position: absolute; right: -1px; top: -31px; width: 170px; height: 38px;
  border: 1px solid #9b4444; background: #fff; text-align: center; line-height: 36px; white-space: nowrap; letter-spacing: .53px;
}
.totop {
  position: absolute; left: 1851px; top: 801px; width: 44px; height: 40px; border-radius: 6px;
  background: rgba(150, 150, 150, .62); display: flex; align-items: center; justify-content: center;
}

/* diagrams */
.circuit text { font: 12px "Liberation Sans", Arial, sans-serif; stroke-width: .25; }
.pt text { fill: #8d2290; stroke: #8d2290; }
.bt text { fill: #2b2bd8; stroke: #2b2bd8; }
.box path { fill: #fff; stroke: #7cc4c0; stroke-dasharray: 1.500 1.500; stroke-width: .9; }
.wire path { fill: none; stroke: #a54aa8; stroke-width: 1.200; }
.pinlead path { stroke: #4fa9e8; stroke-width: 1.300; }
.dark path { fill: none; stroke: #555; stroke-width: 1.200; }
.tt text { font: 500 10.500px "Noto Sans", sans-serif; fill: #3c3c3c; }
.io { font: bold 7px "Noto Sans", sans-serif; fill: #3c8a4c; }
.vals { font: 500 10.500px "Noto Sans", sans-serif; fill: #3c3c3c; text-anchor: middle; }
.wave path { fill: none; stroke: #666; stroke-width: 1.100; vector-effect: non-scaling-stroke; }
.high path { fill: none; stroke: #333; stroke-width: 1.700; vector-effect: non-scaling-stroke; }
.bus path { fill: none; stroke: #6a6ac4; stroke-width: 1.100; vector-effect: non-scaling-stroke; }

/* scrollbar */
.scrollbar { width: 21px; height: 941px; background: #f0f0f0; display: flex; flex-direction: column; align-items: center; padding-top: 9px; }
.thumb { width: 17px; height: 515px; margin-top: 143px; background: #c1c1c1; }
.down { margin-top: auto; margin-bottom: 8px; }

/* taskbar */
.taskbar {
  flex: none; height: 50px; display: flex; justify-content: space-between; color: #fff;
  background: linear-gradient(90deg, #5595b8 0, #4490b9 100px, #3c88b0 480px, #4586a5 560px, #6b93a1 615px, #4c869f 660px, #5389a0 800px, #6f8f90 930px, #557d88 1020px, #3c6d80 1200px, #4c4b42 1400px, #4b463c 1440px, #3d5a72 1490px, #1f5378 1600px, #145478 1750px, #165070 1920px);
}
.apps { display: flex; }
.app { width: 62px; height: 50px; display: flex; align-items: center; justify-content: center; }
.app.first { width: 61px; }
.app.search { padding-right: 3px; }
.app.active { background: rgba(255, 255, 255, .25); }
.app.open { background-image: linear-gradient(#8fdfee, #8fdfee); background-size: 51px 3px; background-position: 50% 100%; background-repeat: no-repeat; }
.app.active.open { background-size: 62px 3px; }
.app.two { background-image: linear-gradient(90deg, #8fdfee 40px, #4e9bb5 40px 41px, #6fb5c8 41px); }
.epic { font: bold 13px "Liberation Sans", sans-serif; fill: #fff; text-anchor: middle; }
.games { font: bold 5.500px "Liberation Sans", sans-serif; fill: #fff; text-anchor: middle; }
.tray { display: flex; align-items: center; }
.weather { margin-left: 12px; width: 117px; font-size: 17.200px; white-space: nowrap; }
.up { margin-left: 20px; }
.cam { margin-left: 16px; }
.wifi { margin-left: 14px; }
.batt { margin-left: 11px; }
.mute { margin-left: 10px; }
.clock { width: 96px; margin-left: 4px; margin-right: 1px; display: flex; flex-direction: column; align-items: center; font-size: 14.200px; line-height: 23px; }
.notif { position: relative; margin-left: 12px; width: 20px; }
.badge {
  position: absolute; left: 9px; top: 10px; width: 21px; height: 21px; border-radius: 50%;
  background: #2f3b45; border: 1px solid #8a9aa5; font-size: 14px; font-weight: 600; line-height: 19px; text-align: center;
}
.peek { width: 6px; height: 50px; margin-left: 25px; border-left: 1px solid #7fa4b5; }
```
